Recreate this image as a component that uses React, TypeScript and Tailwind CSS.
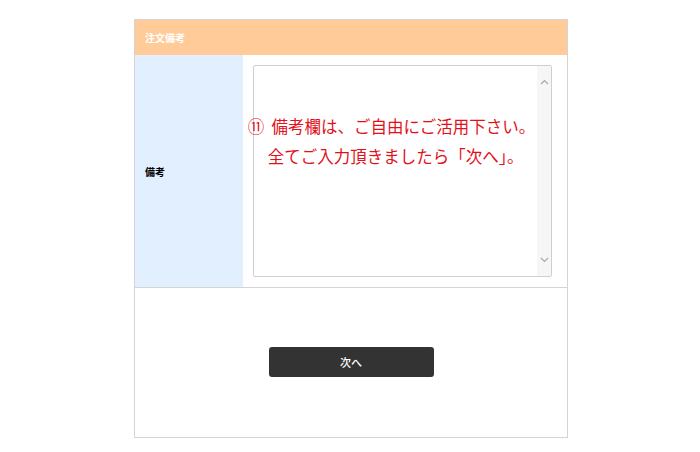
import React from 'react';

const Chevron: React.FC<{ up?: boolean }> = ({ up }) => (
  <svg width="9" height="6" viewBox="0 0 9 6" fill="none" stroke="#a8a8a8" strokeWidth="1.2">
    {up ? <path d="M1 5 L4.5 1.5 L8 5" /> : <path d="M1 1 L4.5 4.5 L8 1" />}
  </svg>
);

export default function App() {
  return (
    <div className="w-[700px] h-[452px] bg-white pt-[19px] font-['Noto_Sans_CJK_JP','Noto_Sans',sans-serif]">
      <div className="ml-[134px] w-[434px] h-[419px] border border-[#d4d4d4] flex flex-col">
        {/* Header */}
        <div className="h-[35px] bg-[#ffcc99] flex items-center px-[10px]">
          <span className="text-[10px] font-bold text-white">注文備考</span>
        </div>

        {/* Remarks row */}
        <div className="h-[233px] flex border-b border-[#d4d4d4]">
          <div className="w-[108px] bg-[#e1efff] flex items-center px-[10px]">
            <span className="text-[10px] font-bold text-black">備考</span>
          </div>
          <div className="flex-1 p-[10px] pr-[15px]">
            <div className="h-full border border-[#cfcfcf] rounded-[2px] flex">
              <div className="flex-1 flex flex-col items-center pt-[45px] text-[#e3101a] text-[16.5px] leading-[30px] whitespace-nowrap">
                <span className="-ml-[8px]">⑪&nbsp; 備考欄は、ご自由にご活用下さい。</span>
                <span>全てご入力頂きましたら「次へ」。</span>
              </div>
              <div className="w-[14px] bg-[#f6f6f6] flex flex-col items-center justify-between py-[13px]">
                <Chevron up />
                <Chevron />
              </div>
            </div>
          </div>
        </div>

        {/* Footer */}
        <div className="flex-1 flex justify-center pt-[59px]">
          <button className="w-[165px] h-[30px] bg-[#333333] rounded-[3px] text-white text-[11px] font-medium">
            次へ
          </button>
        </div>
      </div>
    </div>
  );
}
